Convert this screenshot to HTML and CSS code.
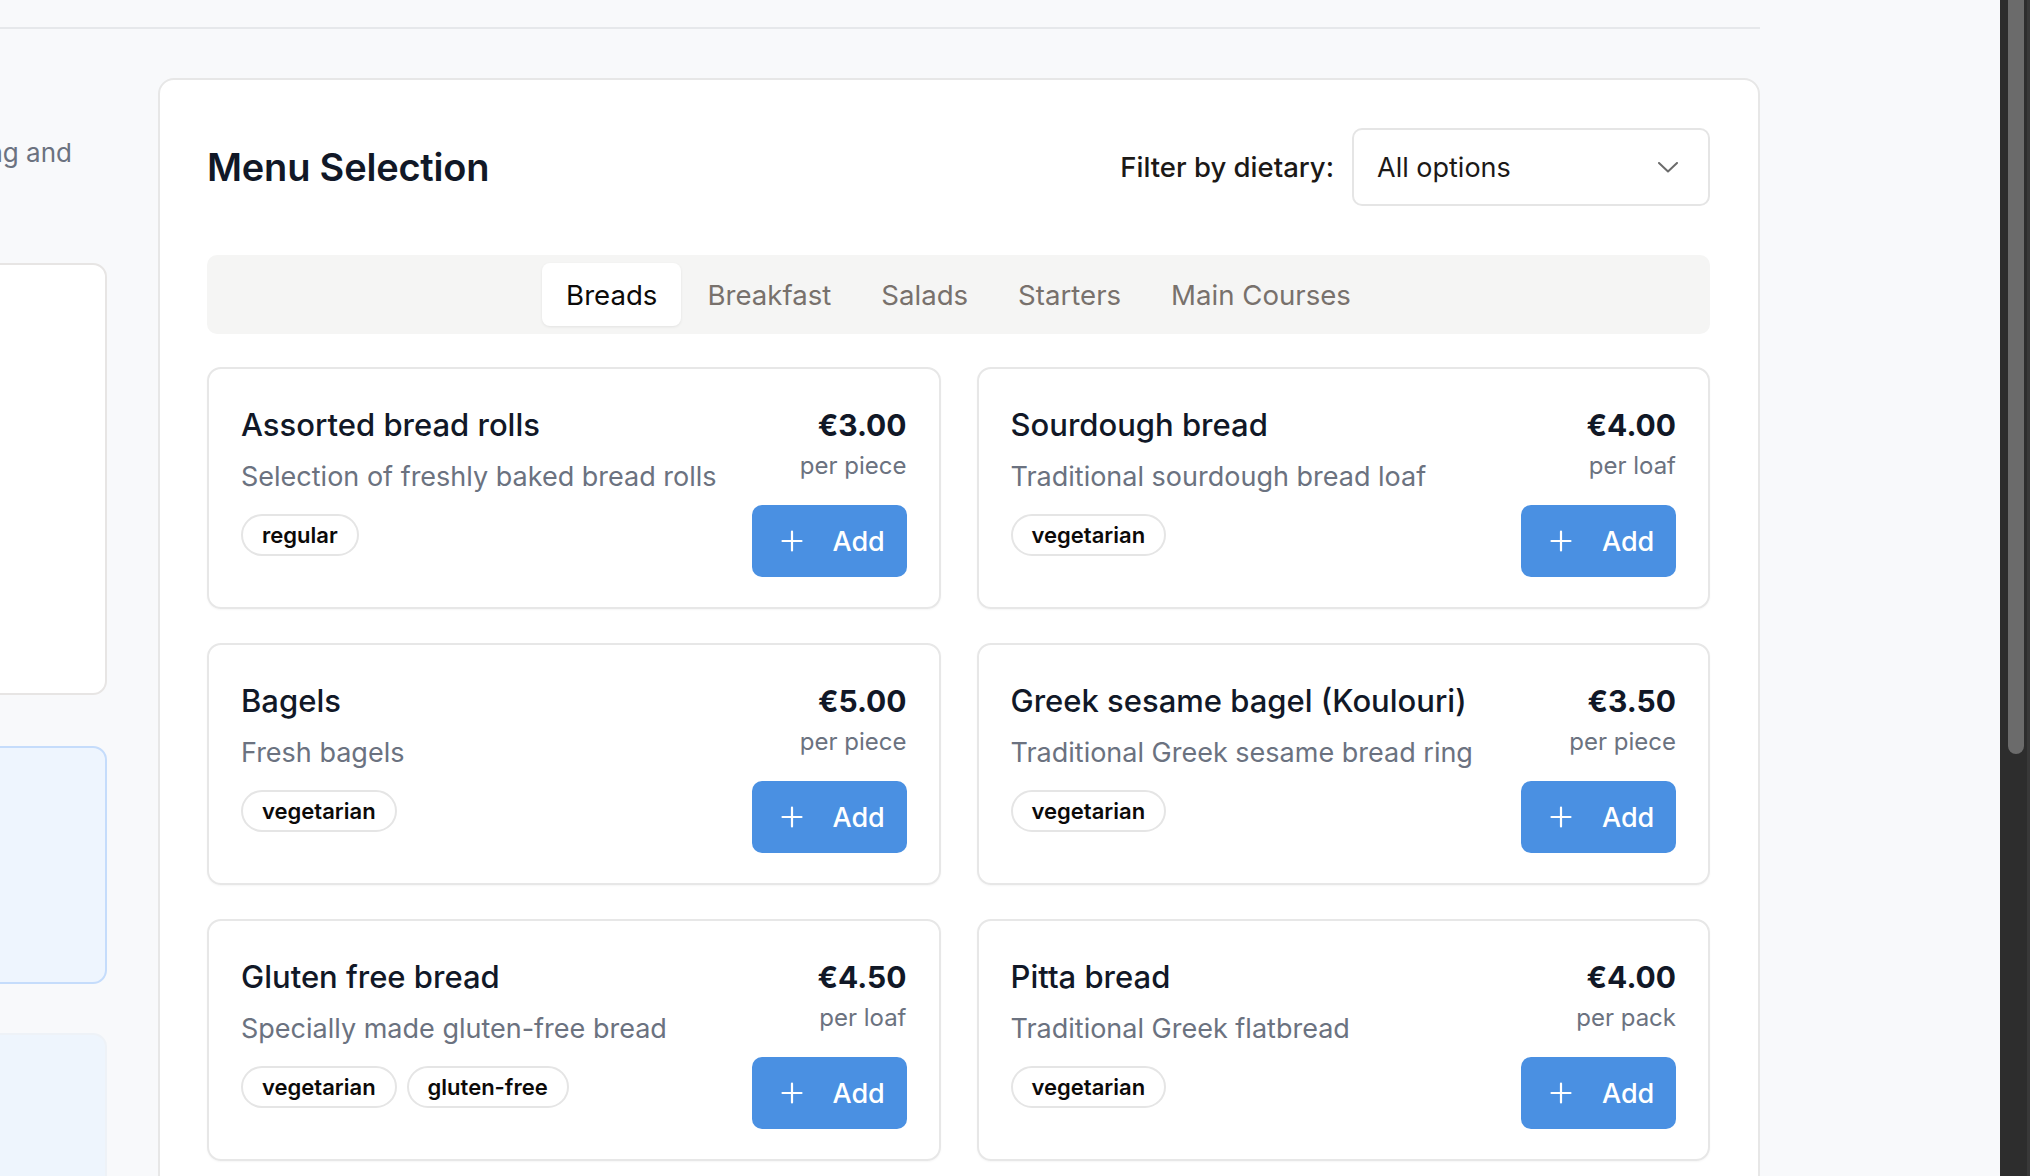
FILE: index.html
```html
<!DOCTYPE html>
<html lang="en">
<head>
<meta charset="utf-8">
<title>Menu Selection</title>
<link rel="stylesheet" href="styles.css">
</head>
<body>
<div class="viewport">
  <div class="page">
    <div class="topbar"></div>
    <div class="content">
      <aside class="side">
        <p class="side-intro"><span>Choose the dishes for your event, covering catering and</span></p>
        <div class="side-card side-card-white"></div>
        <div class="side-card side-card-blue"></div>
        <div class="side-card side-card-pale"></div>
      </aside>
      <main class="menu">
        <div class="menu-head">
          <h1 class="menu-title">Menu Selection</h1>
          <div class="filter">
            <span class="filter-label">Filter by dietary:</span>
            <div class="select">
              <span>All options</span>
              <svg class="chev" width="20" height="11" viewBox="0 0 20 11"><polyline points="1,1 10,9.5 19,1" fill="none" stroke="#6b6b6b" stroke-width="2" stroke-linecap="round" stroke-linejoin="round"/></svg>
            </div>
          </div>
        </div>
        <nav class="tabs">
          <span class="tab active">Breads</span>
          <span class="tab">Breakfast</span>
          <span class="tab">Salads</span>
          <span class="tab">Starters</span>
          <span class="tab">Main Courses</span>
        </nav>
        <div class="grid">
          <div class="item">
            <div class="item-info">
              <div class="item-name">Assorted bread rolls</div>
              <div class="item-desc">Selection of freshly baked bread rolls</div>
              <div class="tags"><span class="tag">regular</span></div>
            </div>
            <div class="item-side">
              <div class="price">€3.00</div>
              <div class="unit">per piece</div>
              <button class="add"><svg width="22" height="22" viewBox="0 0 22 22"><path d="M11 1.5V20.5M1.5 11H20.5" stroke="#fff" stroke-width="2.2" stroke-linecap="round"/></svg><span>Add</span></button>
            </div>
          </div>
          <div class="item">
            <div class="item-info">
              <div class="item-name">Sourdough bread</div>
              <div class="item-desc">Traditional sourdough bread loaf</div>
              <div class="tags"><span class="tag">vegetarian</span></div>
            </div>
            <div class="item-side">
              <div class="price">€4.00</div>
              <div class="unit">per loaf</div>
              <button class="add"><svg width="22" height="22" viewBox="0 0 22 22"><path d="M11 1.5V20.5M1.5 11H20.5" stroke="#fff" stroke-width="2.2" stroke-linecap="round"/></svg><span>Add</span></button>
            </div>
          </div>
          <div class="item">
            <div class="item-info">
              <div class="item-name">Bagels</div>
              <div class="item-desc">Fresh bagels</div>
              <div class="tags"><span class="tag">vegetarian</span></div>
            </div>
            <div class="item-side">
              <div class="price">€5.00</div>
              <div class="unit">per piece</div>
              <button class="add"><svg width="22" height="22" viewBox="0 0 22 22"><path d="M11 1.5V20.5M1.5 11H20.5" stroke="#fff" stroke-width="2.2" stroke-linecap="round"/></svg><span>Add</span></button>
            </div>
          </div>
          <div class="item">
            <div class="item-info">
              <div class="item-name">Greek sesame bagel (Koulouri)</div>
              <div class="item-desc">Traditional Greek sesame bread ring</div>
              <div class="tags"><span class="tag">vegetarian</span></div>
            </div>
            <div class="item-side">
              <div class="price">€3.50</div>
              <div class="unit">per piece</div>
              <button class="add"><svg width="22" height="22" viewBox="0 0 22 22"><path d="M11 1.5V20.5M1.5 11H20.5" stroke="#fff" stroke-width="2.2" stroke-linecap="round"/></svg><span>Add</span></button>
            </div>
          </div>
          <div class="item">
            <div class="item-info">
              <div class="item-name">Gluten free bread</div>
              <div class="item-desc">Specially made gluten-free bread</div>
              <div class="tags"><span class="tag">vegetarian</span><span class="tag">gluten-free</span></div>
            </div>
            <div class="item-side">
              <div class="price">€4.50</div>
              <div class="unit">per loaf</div>
              <button class="add"><svg width="22" height="22" viewBox="0 0 22 22"><path d="M11 1.5V20.5M1.5 11H20.5" stroke="#fff" stroke-width="2.2" stroke-linecap="round"/></svg><span>Add</span></button>
            </div>
          </div>
          <div class="item">
            <div class="item-info">
              <div class="item-name">Pitta bread</div>
              <div class="item-desc">Traditional Greek flatbread</div>
              <div class="tags"><span class="tag">vegetarian</span></div>
            </div>
            <div class="item-side">
              <div class="price">€4.00</div>
              <div class="unit">per pack</div>
              <button class="add"><svg width="22" height="22" viewBox="0 0 22 22"><path d="M11 1.5V20.5M1.5 11H20.5" stroke="#fff" stroke-width="2.2" stroke-linecap="round"/></svg><span>Add</span></button>
            </div>
          </div>
        </div>
      </main>
    </div>
  </div>
</div>
<div class="scrollbar"><div class="thumb"></div></div>
</body>
</html>
```

FILE: styles.css
```css
html, body {
  margin: 0;
  padding: 0;
  height: 100%;
  overflow: hidden;
}
body {
  display: flex;
  background: #f8f9fb;
  font-family: Inter, "Noto Sans", "Liberation Sans", sans-serif;
  color: #111827;
}
.viewport {
  flex: 1;
  overflow: hidden;
  height: 100vh;
}
.page {
  width: 1760px;
}
.topbar {
  height: 27px;
  border-bottom: 2px solid #e6e8eb;
}
.content {
  display: flex;
  align-items: flex-start;
  padding-top: 49px;
}
.side {
  width: 400px;
  margin-left: -293px;
  margin-right: 51px;
  flex-shrink: 0;
}
.side-intro {
  margin: 57px 35px 0 0;
  display: flex;
  justify-content: flex-end;
  font-size: 26px;
  line-height: 36px;
  color: #6b7280;
}
.side-intro span {
  white-space: nowrap;
  flex-shrink: 0;
}
.side-card {
  border-radius: 14px;
  box-sizing: border-box;
}
.side-card-white {
  margin-top: 92px;
  height: 432px;
  background: #fff;
  border: 2px solid #e7e5e4;
}
.side-card-blue {
  margin-top: 51px;
  height: 238px;
  background: #eef5fe;
  border: 2px solid #c5dcfb;
}
.side-card-pale {
  margin-top: 49px;
  height: 300px;
  background: #eef5fd;
  border: 2px solid #eef2f7;
}
.menu {
  flex: 1;
  background: #fff;
  border: 2px solid #e7e7e7;
  border-radius: 16px;
  padding: 48px 48px 48px 47px;
}
.menu-head {
  display: flex;
  align-items: center;
  justify-content: space-between;
}
.menu-title {
  margin: 0;
  font-size: 38px;
  font-weight: 600;
  color: #111827;
  letter-spacing: -0.2px;
}
.filter {
  display: flex;
  align-items: center;
  gap: 18px;
}
.filter-label {
  font-size: 27.5px;
  font-weight: 500;
  color: #1c1917;
}
.select {
  width: 358px;
  height: 78px;
  box-sizing: border-box;
  border: 2px solid #e5e5e5;
  border-radius: 10px;
  display: flex;
  align-items: center;
  justify-content: space-between;
  padding: 0 30px 0 23px;
  font-size: 27px;
  color: #1c1917;
}
.chev {
  display: block;
}
.tabs {
  margin-top: 49px;
  height: 79px;
  box-sizing: border-box;
  background: #f5f5f4;
  border-radius: 10px;
  padding: 8px;
  display: flex;
  justify-content: center;
  gap: 2px;
}
.tab {
  height: 63px;
  padding: 0 24px;
  display: flex;
  align-items: center;
  font-size: 27.6px;
  color: #78716c;
  border-radius: 8px;
}
.tab.active {
  background: #fff;
  color: #0c0a09;
  box-shadow: 0 1px 3px rgba(0, 0, 0, 0.08);
}
.grid {
  margin-top: 33px;
  display: grid;
  grid-template-columns: 1fr 1fr;
  column-gap: 36px;
  row-gap: 34px;
}
.item {
  border: 2px solid #e7e7e7;
  border-radius: 14px;
  padding: 34px 32px 30px 32px;
  display: flex;
  justify-content: space-between;
  box-shadow: 0 1px 2px rgba(0, 0, 0, 0.04);
}
.item-name {
  font-size: 31px;
  line-height: 44px;
  font-weight: 500;
  color: #111827;
}
.item-desc {
  margin-top: 12px;
  font-size: 27px;
  line-height: 36px;
  color: #6b7280;
}
.tags {
  margin-top: 19px;
  display: flex;
  gap: 10px;
}
.tag {
  border: 2px solid #e5e5e5;
  border-radius: 999px;
  padding: 4px 19px;
  font-size: 22px;
  line-height: 30px;
  font-weight: 600;
  color: #0c0a09;
}
.item-side {
  display: flex;
  flex-direction: column;
  align-items: flex-end;
  flex-shrink: 0;
}
.price {
  font-size: 30px;
  line-height: 44px;
  font-weight: 700;
  color: #111827;
}
.unit {
  margin-top: 4px;
  font-size: 24px;
  line-height: 30px;
  color: #6b7280;
}
.add {
  margin-top: 24px;
  width: 155px;
  height: 72px;
  border: none;
  border-radius: 10px;
  background: #4a90e2;
  color: #fff;
  display: flex;
  align-items: center;
  gap: 30px;
  padding: 0 0 0 29px;
  font-family: inherit;
  font-size: 27px;
  font-weight: 500;
}
.add svg {
  display: block;
}
.scrollbar {
  width: 30px;
  height: 100vh;
  flex-shrink: 0;
  background: #2d2d2d;
  box-sizing: border-box;
  padding-left: 8px;
  border-right: 3px solid #383838;
}
.thumb {
  width: 16px;
  height: 754px;
  background: #6b6b6b;
  border-radius: 0 0 8px 8px;
}
```
